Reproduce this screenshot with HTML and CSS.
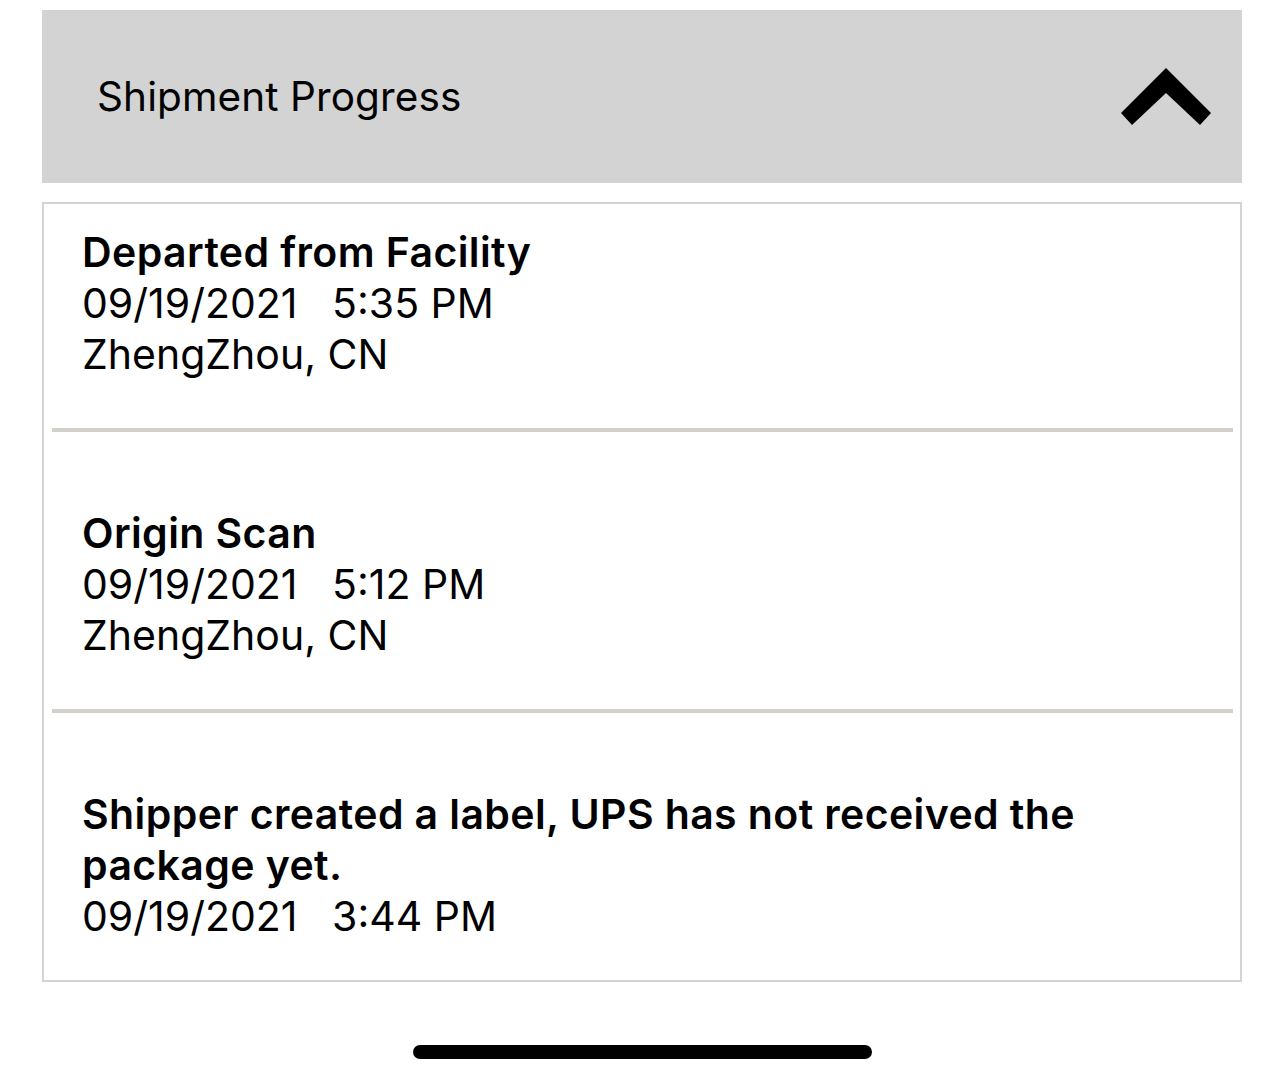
FILE: index.html
```html
<!DOCTYPE html>
<html lang="en">
<head>
<meta charset="utf-8">
<title>Shipment Progress</title>
<link rel="stylesheet" href="styles.css">
</head>
<body>
<div class="screen">
  <div class="panel-header">
    <span class="panel-title">Shipment Progress</span>
    <svg class="chevron" width="92" height="60" viewBox="0 0 92 60" aria-hidden="true">
      <polygon points="1,45 46,0 91,45 80,57 46,25 12,57" fill="#000"/>
    </svg>
  </div>
  <div class="events">
    <div class="event">
      <div class="event-title">Departed from Facility</div>
      <div class="event-line">09/19/2021   5:35 PM</div>
      <div class="event-line">ZhengZhou, CN</div>
    </div>
    <div class="sep"></div>
    <div class="event">
      <div class="event-title">Origin Scan</div>
      <div class="event-line">09/19/2021   5:12 PM</div>
      <div class="event-line">ZhengZhou, CN</div>
    </div>
    <div class="sep"></div>
    <div class="event">
      <div class="event-title">Shipper created a label, UPS has not received the package yet.</div>
      <div class="event-line">09/19/2021   3:44 PM</div>
    </div>
  </div>
  <div class="home-indicator"></div>
</div>
</body>
</html>
```
FILE: styles.css
```css
html, body {
  margin: 0;
  padding: 0;
  background: #ffffff;
}
body {
  font-family: Inter, "Liberation Sans", Arial, sans-serif;
  color: #000;
}
.screen {
  padding: 10px 42px 0;
  display: flex;
  flex-direction: column;
}
.panel-header {
  height: 173px;
  background: #d3d3d3;
  display: flex;
  align-items: center;
  justify-content: space-between;
  padding: 0 30px 0 55px;
}
.panel-title {
  font-size: 40.5px;
  font-weight: 400;
  letter-spacing: 0.1px;
}
.chevron {
  display: block;
  margin-top: 2px;
}
.events {
  margin-top: 19px;
  border: 2px solid #d3d3d3;
  display: flex;
  flex-direction: column;
}
.event {
  padding: 76px 38px 48px 38px;
  font-size: 41px;
  line-height: 51px;
}
.event:first-child {
  padding-top: 23px;
}
.event:last-child {
  padding-bottom: 38px;
}
.event-title {
  font-weight: 600;
  letter-spacing: 0.4px;
}
.event-line {
  white-space: pre;
}
.sep {
  height: 4px;
  margin: 0 7px 0 8px;
  background: #d3cfca;
}
.home-indicator {
  align-self: center;
  width: 459px;
  height: 14px;
  border-radius: 7px;
  background: #000;
  margin-top: 63px;
}
```
